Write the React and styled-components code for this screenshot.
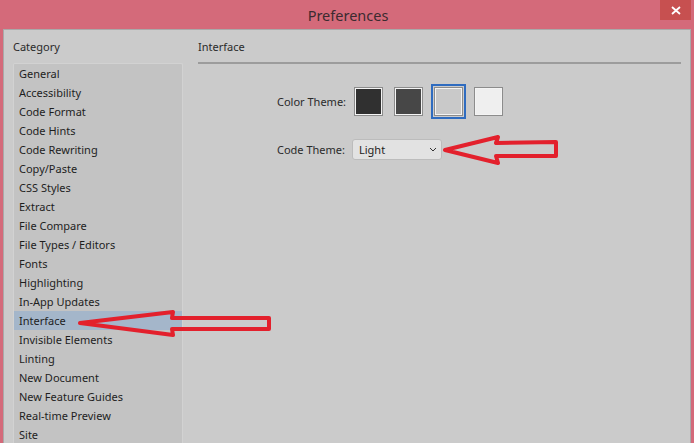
import React from "react";
import styled, { createGlobalStyle } from "styled-components";

const Global = createGlobalStyle`
  html, body { margin: 0; padding: 0; }
  body {
    width: 694px; height: 443px; overflow: hidden;
    background: #d46a7a;
    font-family: "Noto Sans", "Open Sans", sans-serif;
  }
`;

const Frame = styled.div`
  position: relative;
  width: 694px;
  height: 443px;
  display: flex;
  flex-direction: column;
  background: #d46a7a;
  overflow: hidden;
`;

const TitleBar = styled.div`
  height: 29px;
  flex: none;
  display: flex;
  align-items: center;
  justify-content: center;
  position: relative;
`;

const Title = styled.div`
  font-size: 14.5px;
  color: #3b2b30;
  padding-left: 2px;
`;

const CloseBtn = styled.div`
  position: absolute;
  top: 0;
  right: 3px;
  width: 31px;
  height: 20px;
  background: #c75050;
  color: #fff;
  display: flex;
  align-items: center;
  justify-content: center;
`;

const Body = styled.div`
  flex: 1;
  margin: 0 3px 0 3px;
  border: 1px solid #a9a9a9;
  border-bottom: none;
  background: #cbcbcb;
  display: flex;
  padding: 8px 9px 0 9px;
  gap: 15px;
  min-height: 0;
`;

const Side = styled.div`
  width: 170px;
  display: flex;
  flex-direction: column;
  min-height: 0;
`;

const Heading = styled.div`
  font-size: 11px;
  color: #2a2a2a;
  height: 17px;
  line-height: 17px;
  margin-bottom: 8px;
`;

const List = styled.div`
  flex: 1;
  background: #c3c3c3;
  border: 1px solid #d2d2d2;
  border-bottom: none;
  border-radius: 2px 2px 0 0;
`;

const Item = styled.div`
  height: 19px;
  line-height: 19px;
  padding-left: 5px;
  font-size: 11px;
  color: #1e1e1e;
  background: ${(p) => (p.$selected ? "#a4b6ca" : "transparent")};
`;

const Main = styled.div`
  flex: 1;
  display: flex;
  flex-direction: column;
`;

const Separator = styled.div`
  height: 2px;
  background: #9c9c9c;
  margin-top: -1px;
`;

const Form = styled.div`
  padding: 20px 0 0 79px;
  display: flex;
  flex-direction: column;
  gap: 20px;
`;

const Row = styled.div`
  display: flex;
  align-items: center;
  gap: 7px;
`;

const Label = styled.div`
  font-size: 11px;
  color: #2a2a2a;
`;

const Swatches = styled.div`
  display: flex;
  gap: 11px;
  align-items: center;
  margin-left: 1px;
`;

const Swatch = styled.div`
  box-sizing: border-box;
  width: ${(p) => (p.$selected ? "35px" : "29px")};
  height: ${(p) => (p.$selected ? "35px" : "29px")};
  margin: ${(p) => (p.$selected ? "0 -3px" : "0")};
  border: ${(p) => (p.$selected ? "2px solid #2f6cc0" : "none")};
  display: flex;
  align-items: center;
  justify-content: center;
`;

const SwatchFill = styled.div`
  width: 29px;
  height: 29px;
  box-sizing: border-box;
  background: ${(p) => p.$color};
  border: 2px solid #f4f4f4;
  outline: 1px solid #8c8c8c;
  outline-offset: -1px;
`;

const Select = styled.div`
  width: 90px;
  height: 21px;
  box-sizing: border-box;
  background: #e2e2e2;
  border: 1px solid #bcbcbc;
  border-radius: 3px;
  display: flex;
  align-items: center;
  justify-content: space-between;
  padding: 0 4px 0 6px;
  font-size: 11px;
  color: #1e1e1e;
`;

const Overlay = styled.svg`
  position: absolute;
  left: 0;
  top: 0;
  pointer-events: none;
`;

const items = [
  "General",
  "Accessibility",
  "Code Format",
  "Code Hints",
  "Code Rewriting",
  "Copy/Paste",
  "CSS Styles",
  "Extract",
  "File Compare",
  "File Types / Editors",
  "Fonts",
  "Highlighting",
  "In-App Updates",
  "Interface",
  "Invisible Elements",
  "Linting",
  "New Document",
  "New Feature Guides",
  "Real-time Preview",
  "Site",
];

const swatches = ["#303030", "#474747", "#c9c9c9", "#efefef"];

export default function App() {
  return (
    <Frame>
      <Global />
      <TitleBar>
        <Title>Preferences</Title>
        <CloseBtn>
          <svg width="10" height="9" viewBox="0 0 10 9">
            <path d="M1 1 L9 8 M9 1 L1 8" stroke="#fff" strokeWidth="1.8" />
          </svg>
        </CloseBtn>
      </TitleBar>
      <Body>
        <Side>
          <Heading>Category</Heading>
          <List>
            {items.map((it) => (
              <Item key={it} $selected={it === "Interface"}>
                {it}
              </Item>
            ))}
          </List>
        </Side>
        <Main>
          <Heading>Interface</Heading>
          <Separator />
          <Form>
            <Row>
              <Label>Color Theme:</Label>
              <Swatches>
                {swatches.map((c, i) => (
                  <Swatch key={c} $selected={i === 2}>
                    <SwatchFill $color={c} />
                  </Swatch>
                ))}
              </Swatches>
            </Row>
            <Row>
              <Label>Code Theme:</Label>
              <Select>
                <span>Light</span>
                <svg width="8" height="5" viewBox="0 0 8 5">
                  <path d="M1 1 L4 4 L7 1" stroke="#333" strokeWidth="1" fill="none" />
                </svg>
              </Select>
            </Row>
          </Form>
        </Main>
      </Body>
      <Overlay width="694" height="443" viewBox="0 0 694 443">
        <path
          d="M445 150 L498 137 L496 143 L556 142 L556 156 L496 156 L498 163 Z"
          fill="none"
          stroke="#e3202c"
          strokeWidth="4"
          strokeLinejoin="round"
        />
        <path
          d="M80 323 L173 312 L172 318 L269 318 L269 329 L172 329 L173 335 Z"
          fill="none"
          stroke="#e3202c"
          strokeWidth="4"
          strokeLinejoin="round"
        />
      </Overlay>
    </Frame>
  );
}
